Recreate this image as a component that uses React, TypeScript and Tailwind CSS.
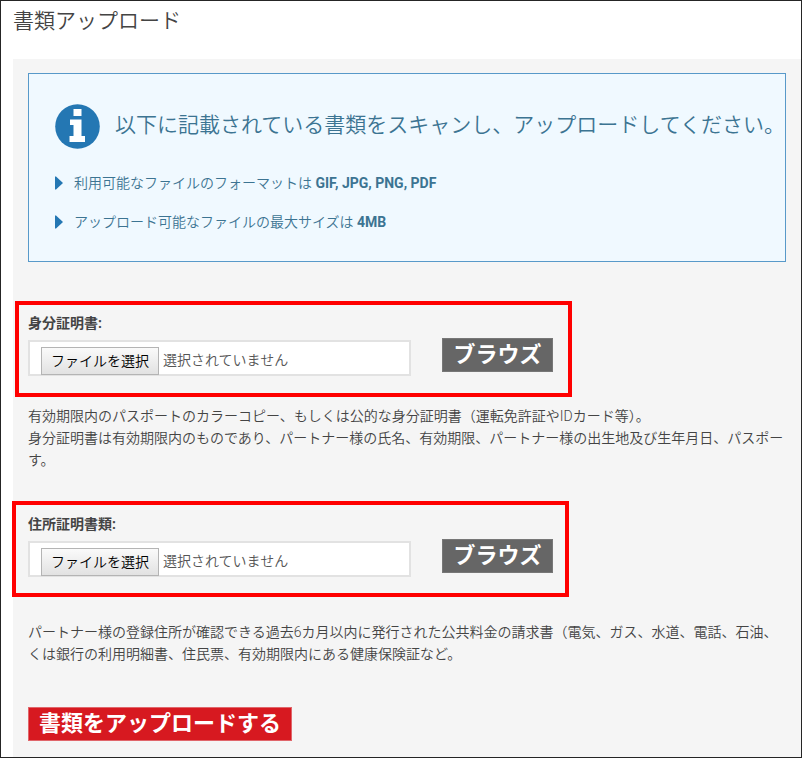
import type { ReactNode } from "react";

type UploadFieldProps = {
  id: string;
  label: string;
  marker: string;
  children: ReactNode;
};

function UploadField({ id, label, marker, children }: UploadFieldProps) {
  return (
    <section>
      <div className="relative h-[88px] pt-2">
        <label htmlFor={id} className="block h-6 font-bold leading-6">
          {label}
        </label>
        <div className="flex items-start">
          <label
            htmlFor={id}
            className="mt-[5px] flex h-9 w-[383px] shrink-0 cursor-pointer items-end border-2 border-[#e2e2e2] bg-white pl-[11px]"
          >
            <input id={id} type="file" className="sr-only" />
            <span className="-mb-px flex h-7 w-[118px] items-center justify-center border border-[#b4b4b4] bg-linear-to-b from-[#fafafa] to-[#e2e2e2] text-black">
              ファイルを選択
            </span>
            <span className="ml-1 flex h-7 items-center text-[#555555]">選択されていません</span>
          </label>
          <button
            type="button"
            className="ml-[31px] mt-[3px] h-[34px] w-[111px] border border-[#777777] bg-[#666666] text-[22px] font-bold leading-7 text-white"
          >
            ブラウズ
          </button>
        </div>
        <div className={`pointer-events-none absolute h-24 w-[557px] border-4 border-[#ff0000] ${marker}`} />
      </div>
      {children}
    </section>
  );
}

function ListItem({ text, value }: { text: string; value: string }) {
  return (
    <li className="flex h-[39px] items-center">
      <svg width="8" height="14" viewBox="0 0 8 14" className="mr-[11px] shrink-0" aria-hidden="true">
        <path d="M0 0.5 L1 0.5 L8 7 L1 13.5 L0 13.5 Z" fill="#2477b3" />
      </svg>
      <span>
        {text} <strong className="font-bold">{value}</strong>
      </span>
    </li>
  );
}

export default function App() {
  return (
    <div className="flex min-h-screen flex-col overflow-hidden border border-[#252525] bg-white pl-3 font-['Roboto','Noto_Sans_CJK_JP',sans-serif] text-[14px] font-[350] leading-[22px] text-[#444444]">
      <h1 className="h-[58px] pt-[5px] text-[21px] font-[350] leading-[30px]">書類アップロード</h1>
      <main className="flex-1 bg-[#f5f5f5] pl-[15px] pt-[14px]">
        <div className="mr-[15px] h-[189px] border border-[#5899c9] bg-[#f0f9ff] pl-[26px] pt-[30px] text-[#3c7492]">
          <div className="flex items-start">
            <svg width="46" height="46" viewBox="0 0 46 46" className="shrink-0" aria-hidden="true">
              <circle cx="22.5" cy="22.5" r="22.3" fill="#2477b3" />
              <path d="M18.5 5 H26.5 V12 H18.5 Z M15 15.5 H26.5 V32 H30 V38 H14.5 V32 H18.5 V21 H15 Z" fill="#fff" />
            </svg>
            <h2 className="ml-[14px] mt-[6px] whitespace-nowrap text-[21px] font-[350] leading-[30px]">
              以下に記載されている書類をスキャンし、アップロードしてください。
            </h2>
          </div>
          <ul className="mt-[13px]">
            <ListItem text="利用可能なファイルのフォーマットは" value="GIF, JPG, PNG, PDF" />
            <ListItem text="アップロード可能なファイルの最大サイズは" value="4MB" />
          </ul>
        </div>
        <form className="mt-[41px]" onSubmit={(event) => event.preventDefault()}>
          <UploadField id="identity" label="身分証明書:" marker="-left-[13px] -top-[2px]">
            <p className="mt-[14px] whitespace-nowrap">
              有効期限内のパスポートのカラーコピー、もしくは公的な身分証明書（運転免許証やIDカード等）。
              <br />
              身分証明書は有効期限内のものであり、パートナー様の氏名、有効期限、パートナー様の出生地及び生年月日、パスポー
              <br />
              す。
            </p>
          </UploadField>
          <div className="mt-[33px]">
            <UploadField id="address" label="住所証明書類:" marker="-left-4 -top-[3px]">
              <p className="mt-[29px] whitespace-nowrap">
                パートナー様の登録住所が確認できる過去6カ月以内に発行された公共料金の請求書（電気、ガス、水道、電話、石油、
                <br />
                くは銀行の利用明細書、住民票、有効期限内にある健康保険証など。
              </p>
            </UploadField>
          </div>
          <button
            type="submit"
            className="mt-[42px] block h-[34px] w-[264px] border border-[#e0666b] bg-[#d71920] text-[22px] font-bold leading-7 text-white"
          >
            書類をアップロードする
          </button>
        </form>
      </main>
    </div>
  );
}
